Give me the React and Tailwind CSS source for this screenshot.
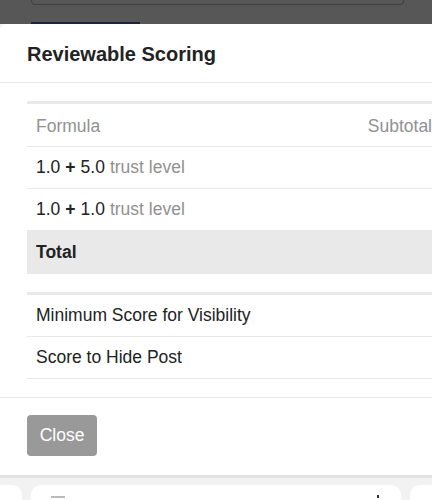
import React from 'react';

const rows = [
  { base: '1.0', add: '5.0', label: 'trust level' },
  { base: '1.0', add: '1.0', label: 'trust level' },
];

const App = () => {
  return (
    <div className="w-[432px] h-[500px] overflow-hidden bg-[#f2f2f2] flex flex-col font-['Liberation_Sans',Arial,sans-serif] text-[#222]">
      {/* page behind the modal, dimmed */}
      <div className="h-[24px] shrink-0 bg-[#575757] relative">
        <div className="absolute left-[31px] w-[373px] top-[-10px] h-[15px] border border-[#3f3f3f] rounded-b-[4px]" />
        <div className="absolute left-[31px] w-[109px] bottom-0 h-[2px] bg-[#1c2340]" />
      </div>

      {/* modal */}
      <div className="h-[451px] shrink-0 bg-white rounded-tl-[6px] flex flex-col">
        <div className="h-[59px] shrink-0 border-b border-[#e9e9e9] flex items-center px-[27px]">
          <h2 className="text-[20px] font-bold text-[#222] pt-[2px]">Reviewable Scoring</h2>
        </div>

        <div className="pt-[18px] pb-[18px] pl-[27px] border-b border-[#e9e9e9] text-[17.5px]">
          <div className="w-[405px] border-t-[3px] border-[#e9e9e9]">
            <div className="h-[43px] flex items-center justify-between pl-[9px] pt-[2px] border-b border-[#e9e9e9] text-[#919191]">
              <span>Formula</span>
              <span>Subtotal</span>
            </div>
            {rows.map((r, i) => (
              <div key={i} className="h-[42px] flex items-center px-[9px] border-b border-[#e9e9e9]">
                <span>{r.base}</span>
                <span className="font-bold mx-[5px]">+</span>
                <span>{r.add}</span>
                <span className="ml-[5px] text-[#919191]">{r.label}</span>
              </div>
            ))}
            <div className="h-[43px] flex items-center px-[9px] bg-[#e9e9e9] font-bold">
              Total
            </div>
          </div>

          <div className="w-[405px] border-t-[3px] border-[#e9e9e9] mt-[18px]">
            <div className="h-[42px] flex items-center px-[9px] border-b border-[#e9e9e9]">
              Minimum Score for Visibility
            </div>
            <div className="h-[42px] flex items-center px-[9px] border-b border-[#e9e9e9]">
              Score to Hide Post
            </div>
          </div>
        </div>

        <div className="pt-[17px] px-[27px]">
          <button className="h-[41px] w-[70px] rounded-[4px] bg-[#999] text-white text-[17.5px]">
            Close
          </button>
        </div>
      </div>

      {/* page below the modal */}
      <div className="h-[3px] shrink-0 bg-[#e3e3e3]" />
      <div className="flex-1 flex gap-[9px] pt-[7px]">
        <div className="w-[22px] bg-white rounded-tr-[10px]" />
        <div className="w-[370px] bg-white rounded-t-[10px] relative">
          <div className="absolute left-[20px] top-[11px] w-[14px] h-[2px] bg-[#bbb]" />
          <div className="absolute left-[346px] top-[10px] w-[2px] h-[3px] bg-[#333]" />
        </div>
        <div className="flex-1 bg-white rounded-tl-[10px]" />
      </div>
    </div>
  );
};

export default App;
